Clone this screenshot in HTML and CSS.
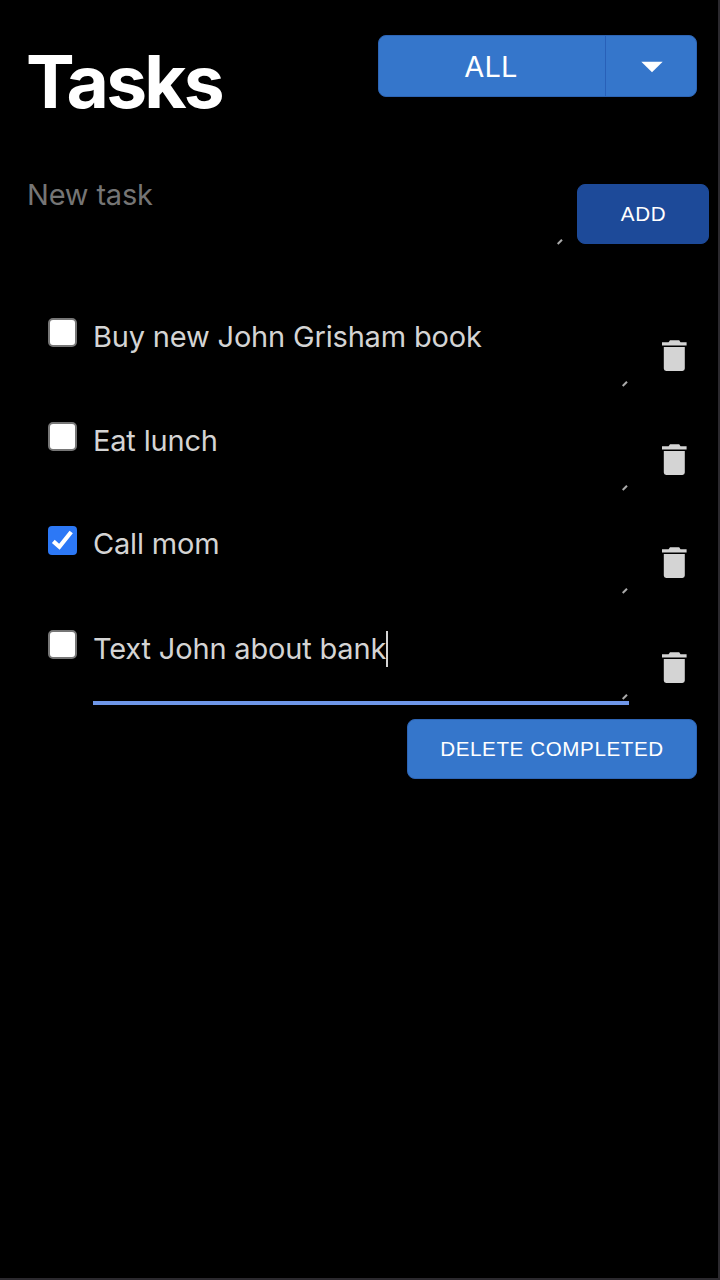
FILE: index.html
```html
<!DOCTYPE html>
<html lang="en">
<head>
<meta charset="utf-8">
<title>Tasks</title>
<link rel="stylesheet" href="styles.css">
</head>
<body>
<svg class="defs" width="0" height="0">
  <symbol id="trash" viewBox="0 0 25 32"><path d="M0 2.2H6.6L8 .2H17.2L18.5 2.2H24.6V5.4H0ZM1.8 7H22.8V28.6Q22.8 31 20.4 31H4.2Q1.8 31 1.8 28.6Z"/></symbol>
  <symbol id="grip" viewBox="0 0 6 6"><path d="M.7 5 5 .7" fill="none" stroke="currentColor" stroke-width="2"/></symbol>
</svg>
<main class="app">
  <header class="header">
    <h1 class="title">Tasks</h1>
    <div class="filter">
      <span class="filter-label">ALL</span>
      <span class="filter-arrow"><svg width="22" height="12" viewBox="0 0 22 12"><path d="M.3 .7H21.7L11 11.2Z" fill="#fff"/></svg></span>
    </div>
  </header>
  <section class="new-task">
    <div class="field placeholder"><span>New task</span><svg class="grip"><use href="#grip"/></svg></div>
    <button class="button add">ADD</button>
  </section>
  <ul class="list">
    <li class="task">
      <span class="check"></span>
      <div class="field"><span>Buy new John Grisham book</span><svg class="grip"><use href="#grip"/></svg></div>
      <svg class="trash"><use href="#trash"/></svg>
    </li>
    <li class="task">
      <span class="check"></span>
      <div class="field"><span>Eat lunch</span><svg class="grip"><use href="#grip"/></svg></div>
      <svg class="trash"><use href="#trash"/></svg>
    </li>
    <li class="task">
      <span class="check checked"><svg width="29" height="29" viewBox="0 0 29 29"><path d="M5.3 15.4 11.4 20.8 23.2 6" fill="none" stroke="#fff" stroke-width="4.2"/></svg></span>
      <div class="field"><span>Call mom</span><svg class="grip"><use href="#grip"/></svg></div>
      <svg class="trash"><use href="#trash"/></svg>
    </li>
    <li class="task">
      <span class="check"></span>
      <div class="field focused"><span>Text John about bank</span><i class="caret"></i><svg class="grip"><use href="#grip"/></svg></div>
      <svg class="trash"><use href="#trash"/></svg>
    </li>
  </ul>
  <footer class="footer"><button class="button delete">DELETE COMPLETED</button></footer>
</main>
</body>
</html>
```
FILE: styles.css
```css
* { box-sizing: border-box; }
html { background: #000; }
body { margin: 0; font-family: Inter, "Liberation Sans", sans-serif; color: #d4d4d4; }
svg { display: block; }
.defs { position: absolute; }
.app {
  display: flex;
  flex-direction: column;
  width: 720px;
  height: 1280px;
  background: #000;
  border-right: 2px solid #2b292e;
  border-bottom: 2px solid #2b292e;
}
.header {
  display: flex;
  justify-content: space-between;
  align-items: flex-start;
  height: 176px;
  padding: 35px 21px 0 26px;
}
.title { margin: 3px 0 0; font-size: 73px; line-height: 88px; font-weight: 700; color: #fff; letter-spacing: -2.8px; }
.filter {
  display: flex;
  width: 319px;
  height: 62px;
  border: 1px solid #2d64b4;
  border-radius: 8px;
  background: #3576cb;
  color: #fff;
}
.filter-label { width: 226px; font-size: 29px; line-height: 62px; text-align: center; padding-right: 2px; letter-spacing: .2px; }
.filter-arrow { flex: 1; display: flex; align-items: center; justify-content: center; border-left: 1px solid #2860b8; padding: 2px 0 0 1px; }
.new-task { display: flex; align-items: flex-start; height: 142px; padding-left: 28px; }
.field {
  display: flex;
  position: relative;
  width: 536px;
  height: 75px;
  padding-top: 1px;
  font-size: 29px;
  line-height: 36px;
  letter-spacing: -.18px;
  white-space: nowrap;
}
.placeholder { color: #757575; height: 69px; }
.placeholder span { margin-left: -1px; }
.button {
  border: 1px solid #2d64b4;
  border-radius: 8px;
  background: #3576cb;
  color: #fff;
  padding: 0;
  height: 60px;
  font: 20.6px/58px "Liberation Sans", Arial, sans-serif;
  letter-spacing: .6px;
}
.add { width: 132px; margin: 8px 0 0 13px; padding-left: 1px; background: #1d4a99; border-color: #1d4a99; }
.list { list-style: none; margin: 0; padding: 0 0 0 48px; }
.task { display: flex; align-items: flex-start; height: 103.5px; }
.task:last-child { height: 89.5px; margin-top: 1px; }
.check { width: 29px; height: 29px; margin-right: 16px; border: 2px solid #767676; border-radius: 5px; background: #fff; flex: none; }
.checked { border: 0; background: #2c78f6; margin-top: 1px; border-radius: 4px; }
.trash { width: 25px; height: 32px; margin: 22px 0 0 33px; fill: #d4d4d4; }
.grip { position: absolute; right: 1px; bottom: 6px; width: 6px; height: 6px; color: #aaa; }
.placeholder .grip { bottom: 0; }
.focused { border-bottom: 4px solid #6e96e8; }
.focused .grip { bottom: 1px; }
.caret { width: 2px; height: 36px; background: #d4d4d4; }
.footer { display: flex; justify-content: flex-end; padding-right: 21px; }
.delete { width: 290px; }
```
